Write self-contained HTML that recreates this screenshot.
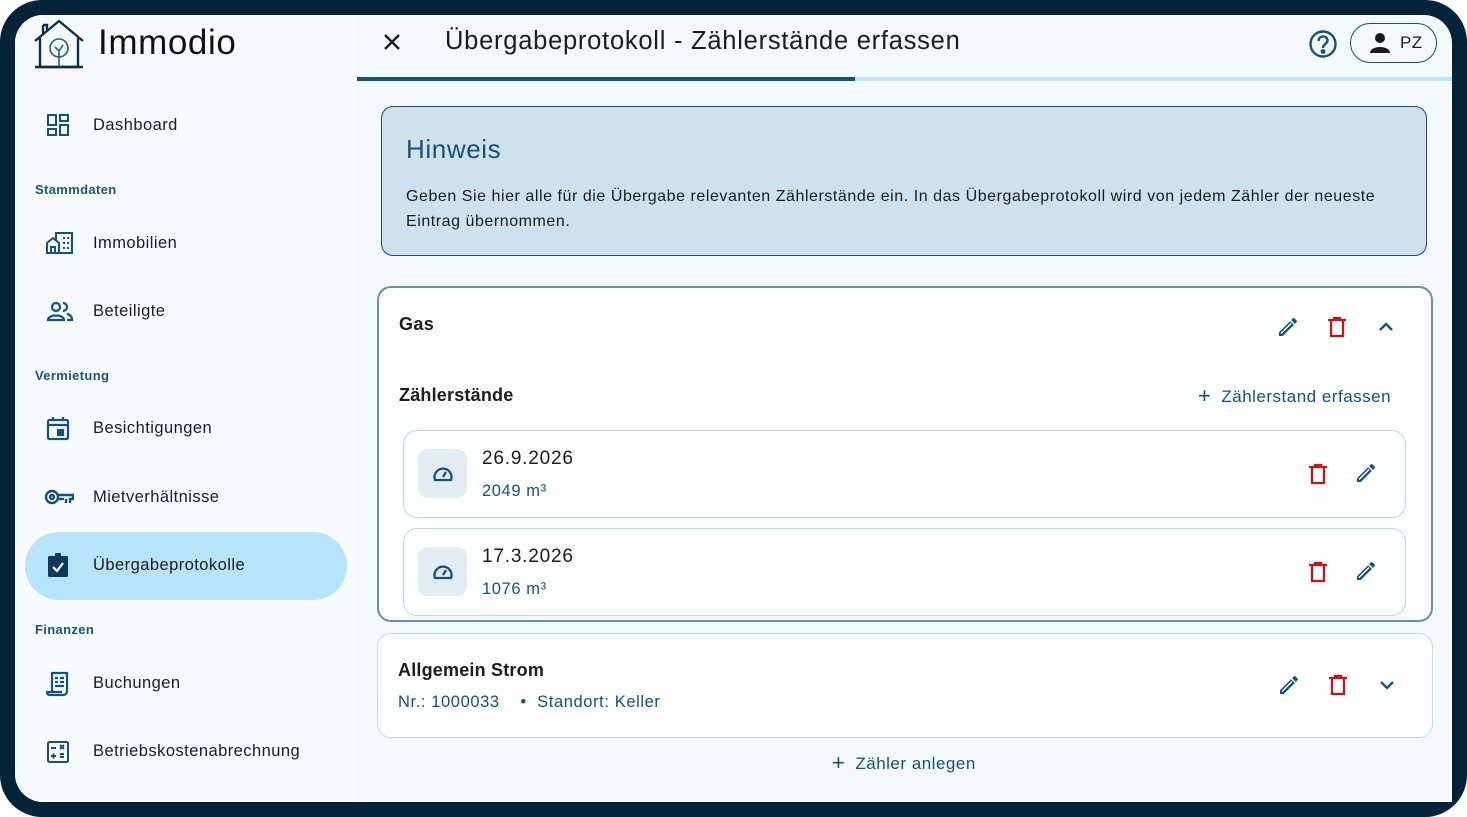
<!DOCTYPE html>
<html><head><meta charset="utf-8"><style>
*{box-sizing:border-box;margin:0;padding:0}
body{width:1467px;height:817px;background:#fff;font-family:"Liberation Sans",sans-serif;position:relative;overflow:hidden;letter-spacing:.35px}
.frame{position:absolute;left:0;top:0;width:1467px;height:817px;background:#032338;border-radius:42px}
.screen{position:absolute;left:15px;top:15px;width:1437px;height:787px;background:#f3f9fd;border-radius:28px 28px 0 28px;overflow:hidden}
.side{position:absolute;left:0;top:0;width:342px;height:787px;background:#f8fbfe}
.abs{position:absolute}
.nav{position:absolute;left:78px;font-size:16.5px;color:#1a1c1e;letter-spacing:.45px}
.sec{position:absolute;left:20px;font-size:13px;font-weight:bold;color:#1b5479}
.ic{position:absolute;left:31px}
.blue{color:#15527a}
.card{position:absolute;background:#fcfdfe;border:1px solid #c4d6e2;border-radius:14px}
.plus{font-size:22px;position:relative;top:1px;margin-right:10px}
</style></head><body>
<div class="frame"></div>
<div class="screen">
 <div class="side">
  <svg class="abs" style="left:18px;top:2px" width="52" height="52" viewBox="0 0 52 52" fill="none" stroke="#0b2d48" stroke-width="2.4"><path d="M2 24 L26 4 L50 24"/><path d="M10 8 V17 M10 8 H14 V14"/><path d="M7 21 V50 H45 V21"/><path d="M2 50 H50"/><circle cx="26" cy="31" r="9" stroke="#1c5f8a" stroke-width="1.6"/><path d="M26 50 V34 M22 30 L26 34 L30 28" stroke="#1c5f8a" stroke-width="1.6"/></svg>
  <div class="abs" style="left:83px;top:8px;font-size:35px;color:#111;letter-spacing:.6px">Immodio</div>
  <svg class="ic" style="top:98px" width="24" height="24" viewBox="0 0 24 24" fill="none" stroke="#15527a" stroke-width="2"><rect x="2" y="2" width="8" height="10"/><rect x="14" y="2" width="8" height="6"/><rect x="14" y="12" width="8" height="10"/><rect x="2" y="16" width="8" height="6"/></svg>
  <div class="nav" style="top:101px">Dashboard</div>
  <div class="sec" style="top:167px">Stammdaten</div>
  <svg class="ic" style="top:216px" width="28" height="24" viewBox="0 0 28 24" fill="none" stroke="#15527a" stroke-width="2"><path d="M1 22 V12 L7 7 L13 12 V22 H1 Z M5 22 V16 H9 V22"/><path d="M10 9 V2 H26 V22 H13"/><path d="M17 7h2M21 7h2M17 12h2M21 12h2M17 17h2M21 17h2"/></svg>
  <div class="nav" style="top:219px">Immobilien</div>
  <svg class="ic" style="top:286px" width="28" height="22" viewBox="0 0 28 22" fill="none" stroke="#15527a" stroke-width="2.2"><circle cx="10" cy="6" r="4"/><path d="M2 19 C2 13 18 13 18 19 Z"/><path d="M17 2 A4 4 0 0 1 17 10 M21 13 C25 14 26 16 26 19 H21"/></svg>
  <div class="nav" style="top:287px">Beteiligte</div>
  <div class="sec" style="top:353px">Vermietung</div>
  <svg class="ic" style="top:401px" width="24" height="25" viewBox="0 0 24 25" fill="none" stroke="#15527a" stroke-width="2.2"><rect x="2" y="4" width="20" height="19" rx="1.5"/><path d="M2 9 H22 M7 1 V5 M17 1 V5"/><rect x="12" y="14" width="5" height="5" fill="#15527a"/></svg>
  <div class="nav" style="top:404px">Besichtigungen</div>
  <svg class="ic" style="top:472px;left:29px" width="30" height="20" viewBox="0 0 30 20" fill="none" stroke="#15527a" stroke-width="2.4"><circle cx="8" cy="10" r="6"/><circle cx="8" cy="10" r="2"/><path d="M14 8 H29 V12 H26 V16 M22 12 V16 M14 12 H20"/></svg>
  <div class="nav" style="top:473px">Mietverhältnisse</div>
  <div class="abs" style="left:10px;top:517px;width:322px;height:68px;background:#b7e3fb;border-radius:34px"></div>
  <svg class="ic" style="top:537px" width="24" height="26" viewBox="0 0 24 26"><rect x="2" y="4" width="20" height="21" rx="1.5" fill="#0d3a5c"/><rect x="9" y="1" width="6" height="5" rx="1" fill="#0d3a5c"/><path d="M7 15 L11 19 L17 11" stroke="#fff" stroke-width="2.2" fill="none"/></svg>
  <div class="nav" style="top:541px">Übergabeprotokolle</div>
  <div class="sec" style="top:607px">Finanzen</div>
  <svg class="ic" style="top:656px" width="24" height="26" viewBox="0 0 24 26" fill="none" stroke="#15527a" stroke-width="2.2"><path d="M6 20 V2 H21 V20 C21 23 19 24 17 24 H4 C2 24 1 23 1 21 H16"/><path d="M9 7h3M14 7h4M9 11h3M14 11h4M9 15h9"/></svg>
  <div class="nav" style="top:659px">Buchungen</div>
  <svg class="ic" style="top:725px" width="24" height="24" viewBox="0 0 24 24" fill="none" stroke="#15527a" stroke-width="2"><rect x="2" y="2" width="20" height="20" rx="1.5"/><path d="M5 8h5M14 5l4 4M18 5l-4 4M5 16h5M7.5 13.5v5M14 14h4M14 17h4"/></svg>
  <div class="nav" style="top:727px">Betriebskostenabrechnung</div>
 </div>

 <svg class="abs" style="left:367px;top:17px" width="20" height="20" viewBox="0 0 20 20" stroke="#1a1c1e" stroke-width="2.4"><path d="M3 3L17 17M17 3L3 17"/></svg>
 <div class="abs" style="left:430px;top:12px;font-size:25.5px;color:#1a1c1e;letter-spacing:.75px">Übergabeprotokoll - Zählerstände erfassen</div>
 <svg class="abs" style="left:1293px;top:14px" width="30" height="30" viewBox="0 0 30 30" fill="none" stroke="#15527a" stroke-width="2.4"><circle cx="15" cy="15" r="12.5"/><path d="M10.5 12 C10.5 6 19.5 6 19.5 11.5 C19.5 15 15 15 15 19"/><circle cx="15" cy="22.5" r="1.2" fill="#15527a"/></svg>
 <div class="abs" style="left:1335px;top:8px;width:87px;height:40px;border:1.5px solid #15527a;border-radius:20px"></div>
 <svg class="abs" style="left:1354px;top:17px" width="22" height="22" viewBox="0 0 22 22" fill="#1a1c1e"><circle cx="11" cy="6" r="5"/><path d="M1 21 C1 13 21 13 21 21 Z"/></svg>
 <div class="abs" style="left:1385px;top:18px;font-size:17px;color:#1a1c1e">PZ</div>
 <div class="abs" style="left:342px;top:62px;width:1095px;height:4px;background:#b7e3fb"></div>
 <div class="abs" style="left:342px;top:62px;width:498px;height:4px;background:#15527a"></div>

 <div class="abs" style="left:366px;top:91px;width:1046px;height:150px;background:#cfe1ec;border:1.5px solid #15527a;border-radius:12px"></div>
 <div class="abs blue" style="left:391px;top:119px;font-size:26px;letter-spacing:.6px">Hinweis</div>
 <div class="abs" style="left:391px;top:169px;width:1000px;font-size:16px;line-height:25px;color:#1a1c1e;letter-spacing:.55px">Geben Sie hier alle für die Übergabe relevanten Zählerstände ein. In das Übergabeprotokoll wird von jedem Zähler der neueste Eintrag übernommen.</div>

 <div class="card" style="left:362px;top:271px;width:1056px;height:336px;border:2px solid #6b8fa8"></div>
 <div class="abs" style="left:384px;top:299px;font-size:18px;font-weight:bold;color:#1a1c1e">Gas</div>
 <svg class="abs" style="left:1261px;top:300px" width="24" height="24" viewBox="0 0 24 24" fill="#15527a"><path d="M3 17.25V21h3.75L17.81 9.94l-3.75-3.75L3 17.25zM20.71 7.04a1 1 0 0 0 0-1.41l-2.34-2.34a1 1 0 0 0-1.41 0l-1.83 1.83 3.75 3.75 1.83-1.83z"/><path d="M5 18.5 L15 8.5" stroke="#fcfdfe" stroke-width="1.5" fill="none"/></svg>
 <svg class="abs" style="left:1310px;top:300px" width="24" height="24" viewBox="0 0 24 24" fill="none" stroke="#c01818" stroke-width="2.3"><path d="M3 5H21M9 5V3H15V5"/><path d="M6 6V21H18V6"/></svg>
 <svg class="abs" style="left:1362px;top:303px" width="18" height="18" viewBox="0 0 18 18" fill="none" stroke="#15527a" stroke-width="2.3"><path d="M3 12L9 6L15 12"/></svg>
 <div class="abs" style="left:384px;top:370px;font-size:18px;font-weight:bold;color:#1a1c1e;letter-spacing:.2px">Zählerstände</div>
 <div class="abs blue" style="left:1183px;top:367px;font-size:17px;letter-spacing:.5px"><span class="plus">+</span>Zählerstand erfassen</div>

 <div class="card" style="left:388px;top:415px;width:1003px;height:88px"></div>
 <div class="abs" style="left:403px;top:434px;width:49px;height:49px;background:#e2ecf2;border-radius:10px"></div>
 <svg class="abs" style="left:417px;top:449px" width="22" height="20" viewBox="0 0 22 20" fill="none" stroke="#15527a" stroke-width="2.3"><path d="M3 16 A8.5 8.5 0 1 1 19 16 Z"/><path d="M11 13 L14 8"/></svg>
 <div class="abs" style="left:467px;top:433px;font-size:19px;color:#1a1c1e;letter-spacing:.8px">26.9.2026</div>
 <div class="abs blue" style="left:467px;top:467px;font-size:16.5px;letter-spacing:.6px">2049 m³</div>
 <svg class="abs" style="left:1291px;top:447px" width="24" height="24" viewBox="0 0 24 24" fill="none" stroke="#c01818" stroke-width="2.3"><path d="M3 5H21M9 5V3H15V5"/><path d="M6 6V21H18V6"/></svg>
 <svg class="abs" style="left:1339px;top:446px" width="24" height="24" viewBox="0 0 24 24" fill="#15527a"><path d="M3 17.25V21h3.75L17.81 9.94l-3.75-3.75L3 17.25zM20.71 7.04a1 1 0 0 0 0-1.41l-2.34-2.34a1 1 0 0 0-1.41 0l-1.83 1.83 3.75 3.75 1.83-1.83z"/><path d="M5 18.5 L15 8.5" stroke="#fcfdfe" stroke-width="1.5" fill="none"/></svg>

 <div class="card" style="left:388px;top:513px;width:1003px;height:88px"></div>
 <div class="abs" style="left:403px;top:532px;width:49px;height:49px;background:#e2ecf2;border-radius:10px"></div>
 <svg class="abs" style="left:417px;top:547px" width="22" height="20" viewBox="0 0 22 20" fill="none" stroke="#15527a" stroke-width="2.3"><path d="M3 16 A8.5 8.5 0 1 1 19 16 Z"/><path d="M11 13 L14 8"/></svg>
 <div class="abs" style="left:467px;top:531px;font-size:19px;color:#1a1c1e;letter-spacing:.8px">17.3.2026</div>
 <div class="abs blue" style="left:467px;top:565px;font-size:16.5px;letter-spacing:.6px">1076 m³</div>
 <svg class="abs" style="left:1291px;top:545px" width="24" height="24" viewBox="0 0 24 24" fill="none" stroke="#c01818" stroke-width="2.3"><path d="M3 5H21M9 5V3H15V5"/><path d="M6 6V21H18V6"/></svg>
 <svg class="abs" style="left:1339px;top:544px" width="24" height="24" viewBox="0 0 24 24" fill="#15527a"><path d="M3 17.25V21h3.75L17.81 9.94l-3.75-3.75L3 17.25zM20.71 7.04a1 1 0 0 0 0-1.41l-2.34-2.34a1 1 0 0 0-1.41 0l-1.83 1.83 3.75 3.75 1.83-1.83z"/><path d="M5 18.5 L15 8.5" stroke="#fcfdfe" stroke-width="1.5" fill="none"/></svg>

 <div class="card" style="left:362px;top:618px;width:1056px;height:105px"></div>
 <div class="abs" style="left:383px;top:645px;font-size:18px;font-weight:bold;color:#1a1c1e;letter-spacing:.2px">Allgemein Strom</div>
 <div class="abs blue" style="left:383px;top:678px;font-size:16.5px;letter-spacing:.6px">Nr.: 1000033 &nbsp;&nbsp;&nbsp;•&nbsp; Standort: Keller</div>
 <svg class="abs" style="left:1262px;top:658px" width="24" height="24" viewBox="0 0 24 24" fill="#15527a"><path d="M3 17.25V21h3.75L17.81 9.94l-3.75-3.75L3 17.25zM20.71 7.04a1 1 0 0 0 0-1.41l-2.34-2.34a1 1 0 0 0-1.41 0l-1.83 1.83 3.75 3.75 1.83-1.83z"/><path d="M5 18.5 L15 8.5" stroke="#fcfdfe" stroke-width="1.5" fill="none"/></svg>
 <svg class="abs" style="left:1311px;top:658px" width="24" height="24" viewBox="0 0 24 24" fill="none" stroke="#c01818" stroke-width="2.3"><path d="M3 5H21M9 5V3H15V5"/><path d="M6 6V21H18V6"/></svg>
 <svg class="abs" style="left:1363px;top:661px" width="18" height="18" viewBox="0 0 18 18" fill="none" stroke="#15527a" stroke-width="2.3"><path d="M3 6L9 12L15 6"/></svg>
 <div class="abs blue" style="left:817px;top:734px;font-size:17px;letter-spacing:.5px"><span class="plus">+</span>Zähler anlegen</div>
</div>
</body></html>
